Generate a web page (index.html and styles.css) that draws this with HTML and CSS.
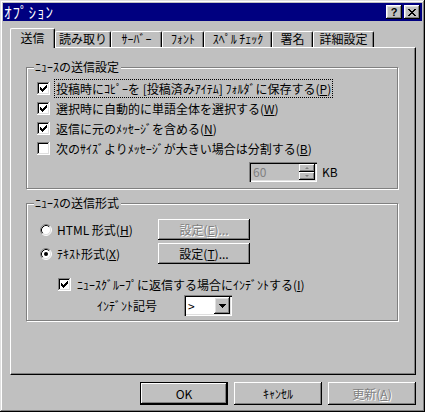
FILE: index.html
```html
<!DOCTYPE html>
<html lang="ja">
<head>
<meta charset="utf-8">
<title>オプション</title>
<link rel="stylesheet" href="styles.css">
</head>
<body>
<svg class="defs" width="0" height="0" aria-hidden="true">
  <defs>
    <symbol id="cb" viewBox="0 0 13 13">
      <path fill="#fff" d="M0 0h13v13H0z"/>
      <path fill="#808080" d="M0 0h12v1H1v11H0z"/>
      <path fill="#000" d="M1 1h10v1H2v9H1z"/>
      <path fill="#dfdfdf" d="M11 1h1v11H1v-1h10z"/>
    </symbol>
    <symbol id="chk" viewBox="0 0 13 13">
      <path fill="#000" d="M3 5h1v3H3zM4 6h1v3H4zM5 7h1v3H5zM6 6h1v3H6zM7 5h1v3H7zM8 4h1v3H8zM9 3h1v3H9z"/>
    </symbol>
    <symbol id="rb" viewBox="0 0 12 12">
      <circle cx="6" cy="6" r="5" fill="#fff"/>
      <path d="M2.11 9.89A5.5 5.5 0 0 1 9.89 2.11" fill="none" stroke="#808080"/>
      <path d="M9.89 2.11A5.5 5.5 0 0 1 2.11 9.89" fill="none" stroke="#fff"/>
      <path d="M2.82 9.18A4.5 4.5 0 0 1 9.18 2.82" fill="none" stroke="#000"/>
      <path d="M9.18 2.82A4.5 4.5 0 0 1 2.82 9.18" fill="none" stroke="#dfdfdf"/>
    </symbol>
  </defs>
</svg>
<div class="window">
  <div class="titlebar">
    <span class="title">ｵﾌﾟｼｮﾝ</span>
    <div class="caption-btns">
      <span class="cap-btn help">?</span>
      <span class="cap-btn close"><svg width="8" height="7" viewBox="0 0 8 7" shape-rendering="crispEdges"><path fill="#000" d="M0 0h2v1H0zM6 0h2v1H6zM1 1h2v1H1zM5 1h2v1H5zM2 2h4v1H2zM3 3h2v1H3zM2 4h4v1H2zM1 5h2v1H1zM5 5h2v1H5zM0 6h2v1H0zM6 6h2v1H6z"/></svg></span>
    </div>
  </div>
  <div class="content">
    <div class="tabs">
      <div class="tab active t-send">送信</div>
      <div class="tab t-read">読み取り</div>
      <div class="tab t-server">ｻｰﾊﾞｰ</div>
      <div class="tab t-font">ﾌｫﾝﾄ</div>
      <div class="tab t-spell">ｽﾍﾟﾙ ﾁｪｯｸ</div>
      <div class="tab t-sig">署名</div>
      <div class="tab t-adv">詳細設定</div>
    </div>
    <div class="panel">
      <div class="group g1">
        <div class="legend l1">ﾆｭｰｽの送信設定</div>
        <div class="check-row first">
          <svg class="box" width="13" height="13"><use href="#cb"/><use href="#chk"/></svg>
          <span class="lbl focus">投稿時にｺﾋﾟｰを [投稿済みｱｲﾃﾑ] ﾌｫﾙﾀﾞに保存する(<u>P</u>)</span>
        </div>
        <div class="check-row">
          <svg class="box" width="13" height="13"><use href="#cb"/><use href="#chk"/></svg>
          <span class="lbl">選択時に自動的に単語全体を選択する(<u>W</u>)</span>
        </div>
        <div class="check-row">
          <svg class="box" width="13" height="13"><use href="#cb"/><use href="#chk"/></svg>
          <span class="lbl">返信に元のﾒｯｾｰｼﾞを含める(<u>N</u>)</span>
        </div>
        <div class="check-row">
          <svg class="box" width="13" height="13"><use href="#cb"/></svg>
          <span class="lbl">次のｻｲｽﾞよりﾒｯｾｰｼﾞが大きい場合は分割する(<u>B</u>)</span>
        </div>
        <div class="spin-row">
          <div class="spin sunken">
            <span class="spin-val">60</span>
            <div class="spin-btns">
              <span class="sbtn"><i class="arr up"></i></span>
              <span class="sbtn"><i class="arr down"></i></span>
            </div>
          </div>
          <span class="unit">KB</span>
        </div>
      </div>
      <div class="group g2">
        <div class="legend l2">ﾆｭｰｽの送信形式</div>
        <div class="radio-row first">
          <svg class="radio" width="12" height="12"><use href="#rb"/></svg>
          <span class="rlbl">HTML 形式(<u>H</u>)</span>
          <span class="btn gbtn disabled">設定(<u>E</u>)...</span>
        </div>
        <div class="radio-row second">
          <svg class="radio" width="12" height="12"><use href="#rb"/><circle cx="6" cy="6" r="2" fill="#000"/></svg>
          <span class="rlbl">ﾃｷｽﾄ形式(<u>X</u>)</span>
          <span class="btn gbtn">設定(<u>T</u>)...</span>
        </div>
        <div class="check-row indent-check">
          <svg class="box" width="13" height="13"><use href="#cb"/><use href="#chk"/></svg>
          <span class="lbl">ﾆｭｰｽｸﾞﾙｰﾌﾟに返信する場合にｲﾝﾃﾞﾝﾄする(<u>I</u>)</span>
        </div>
        <div class="indent-row">
          <span class="ilbl">ｲﾝﾃﾞﾝﾄ記号</span>
          <div class="combo sunken">
            <span class="combo-val">&gt;</span>
            <span class="combo-btn"><svg width="7" height="4" viewBox="0 0 7 4" shape-rendering="crispEdges"><path fill="#000" d="M0 0h7v1H0zM1 1h5v1H1zM2 2h3v1H2zM3 3h1v1H3z"/></svg></span>
          </div>
        </div>
      </div>
    </div>
    <div class="footer">
      <span class="btn fbtn default">OK</span>
      <span class="btn fbtn">ｷｬﾝｾﾙ</span>
      <span class="btn fbtn disabled">更新(<u>A</u>)</span>
    </div>
  </div>
</div>
</body>
</html>
```
FILE: styles.css
```css
* { box-sizing: border-box; }
html, body { margin: 0; padding: 0; }
body {
  width: 425px;
  height: 412px;
  overflow: hidden;
  background: #c0c0c0;
  font-family: "Noto Sans CJK JP", "Noto Sans", sans-serif;
  font-size: 12px;
  line-height: 14px;
  color: #000;
}
.defs { position: absolute; width: 0; height: 0; overflow: hidden; }
u { text-decoration: underline; text-underline-offset: 1px; }

.window {
  width: 425px;
  height: 412px;
  padding: 3px;
  display: flex;
  flex-direction: column;
  background: #c0c0c0;
  box-shadow: inset -1px -1px #000, inset 1px 1px #dfdfdf, inset -2px -2px #808080, inset 2px 2px #fff;
}

/* title bar */
.titlebar {
  flex: none;
  height: 18px;
  background: #000080;
  color: #fff;
  display: flex;
  align-items: center;
  justify-content: space-between;
  padding: 0 2px 0 1px;
}
.title { font-size: 15px; line-height: 18px; letter-spacing: 1px; }
.caption-btns { display: flex; gap: 2px; }
.cap-btn {
  width: 16px;
  height: 14px;
  background: #c0c0c0;
  color: #000;
  display: flex;
  align-items: center;
  justify-content: center;
  box-shadow: inset -1px -1px #000, inset 1px 1px #fff, inset -2px -2px #808080, inset 2px 2px #dfdfdf;
}
.cap-btn.help {
  font-family: "Liberation Sans", sans-serif;
  font-weight: bold;
  font-size: 11px;
  line-height: 12px;
}
.cap-btn.close svg { display: block; }

/* body */
.content {
  flex: 1;
  padding: 7px 6px 0 7px;
  display: flex;
  flex-direction: column;
}

/* tabs */
.tabs {
  display: flex;
  align-items: flex-end;
  height: 19px;
  position: relative;
  z-index: 1;
}
.tab {
  height: 16px;
  background: #c0c0c0;
  text-align: center;
  line-height: 14px;
  white-space: nowrap;
  border-top: 1px solid #fff;
  border-left: 1px solid #fff;
  border-right: 1px solid #000;
  border-radius: 2px 2px 0 0;
  box-shadow: inset -1px 0 #808080;
}
.tab.active { height: 20px; margin-bottom: -1px; padding-top: 2px; }
.t-send { width: 45px; }
.t-read { width: 56px; }
.t-server { width: 51px; }
.t-font { width: 42px; }
.t-spell { width: 68px; }
.t-sig { width: 41px; }
.t-adv { width: 61px; }

/* panel */
.panel {
  flex: none;
  width: 406px;
  height: 328px;
  border-top: 1px solid #fff;
  border-left: 1px solid #fff;
  border-right: 1px solid #000;
  border-bottom: 1px solid #000;
  box-shadow: inset -1px -1px #808080;
  padding-left: 15px;
  display: flex;
  flex-direction: column;
}

.group {
  flex: none;
  width: 372px;
  border: 1px solid #808080;
  box-shadow: inset 1px 1px #fff, 1px 1px #fff;
  display: flex;
  flex-direction: column;
  align-items: flex-start;
}
.g1 { margin-top: 19px; height: 122px; padding-left: 10px; }
.g2 { margin-top: 14px; height: 118px; padding-left: 13px; }

.legend {
  margin-top: -8px;
  padding: 0 2px 0 1px;
  line-height: 14px;
  background: #c0c0c0;
  white-space: nowrap;
}
.l1 { margin-left: -3px; }
.l2 { margin-left: -6px; }

.check-row {
  display: flex;
  align-items: center;
  height: 20px;
  white-space: nowrap;
}
.check-row.first { margin-top: 4px; }
.box { display: block; flex: none; }
.lbl {
  margin-left: 4px;
  padding: 0 1px;
  line-height: 17px;
  border: 1px solid transparent;
}
.lbl.focus { border: 1px dotted #000; }

.spin-row {
  margin: 4px 0 0 212px;
  height: 20px;
  display: flex;
  align-items: center;
  gap: 5px;
}
.sunken {
  box-shadow: inset 1px 1px #808080, inset 2px 2px #000, inset -1px -1px #fff, inset -2px -2px #dfdfdf;
}
.spin {
  width: 68px;
  height: 20px;
  padding: 2px;
  display: flex;
  background: #c0c0c0;
}
.spin-val { flex: 1; color: #808080; padding-left: 2px; line-height: 16px; }
.spin-btns { width: 16px; display: flex; flex-direction: column; }
.sbtn {
  height: 8px;
  display: flex;
  align-items: center;
  justify-content: center;
  box-shadow: inset -1px -1px #000, inset 1px 1px #fff, inset -2px -2px #808080;
}
.arr { display: block; width: 0; height: 0; border-left: 2px solid transparent; border-right: 2px solid transparent; }
.arr.up { border-bottom: 2px solid #808080; }
.arr.down { border-top: 2px solid #808080; }
.unit { line-height: 14px; }

.radio-row {
  display: flex;
  align-items: center;
  height: 21px;
  white-space: nowrap;
}
.radio-row.first { margin-top: 9px; }
.radio-row.second { margin-top: 3px; }
.radio { display: block; flex: none; }
.rlbl { width: 101px; margin-left: 5px; }

.btn {
  display: flex;
  align-items: center;
  justify-content: center;
  background: #c0c0c0;
  white-space: nowrap;
  box-shadow: inset -1px -1px #000, inset 1px 1px #fff, inset -2px -2px #808080;
}
.btn.disabled { color: #808080; text-shadow: 1px 1px 0 #fff; }
.btn.default { border: 1px solid #000; }
.gbtn { width: 92px; height: 21px; }

.indent-check { margin: 11px 0 0 18px; height: 18px; }
.indent-row {
  margin: 2px 0 0 57px;
  display: flex;
  align-items: center;
  height: 21px;
}
.ilbl { width: 87px; }
.combo {
  width: 48px;
  height: 21px;
  padding: 2px;
  display: flex;
  background: #fff;
}
.combo-val { flex: 1; padding-left: 2px; line-height: 17px; }
.combo-btn {
  width: 16px;
  height: 17px;
  background: #c0c0c0;
  display: flex;
  align-items: center;
  justify-content: center;
  box-shadow: inset -1px -1px #000, inset 1px 1px #fff, inset -2px -2px #808080, inset 2px 2px #dfdfdf;
}
.combo-btn svg { display: block; }

.footer {
  margin-top: 7px;
  display: flex;
  justify-content: flex-end;
  gap: 6px;
}
.fbtn { width: 88px; height: 23px; }
```
